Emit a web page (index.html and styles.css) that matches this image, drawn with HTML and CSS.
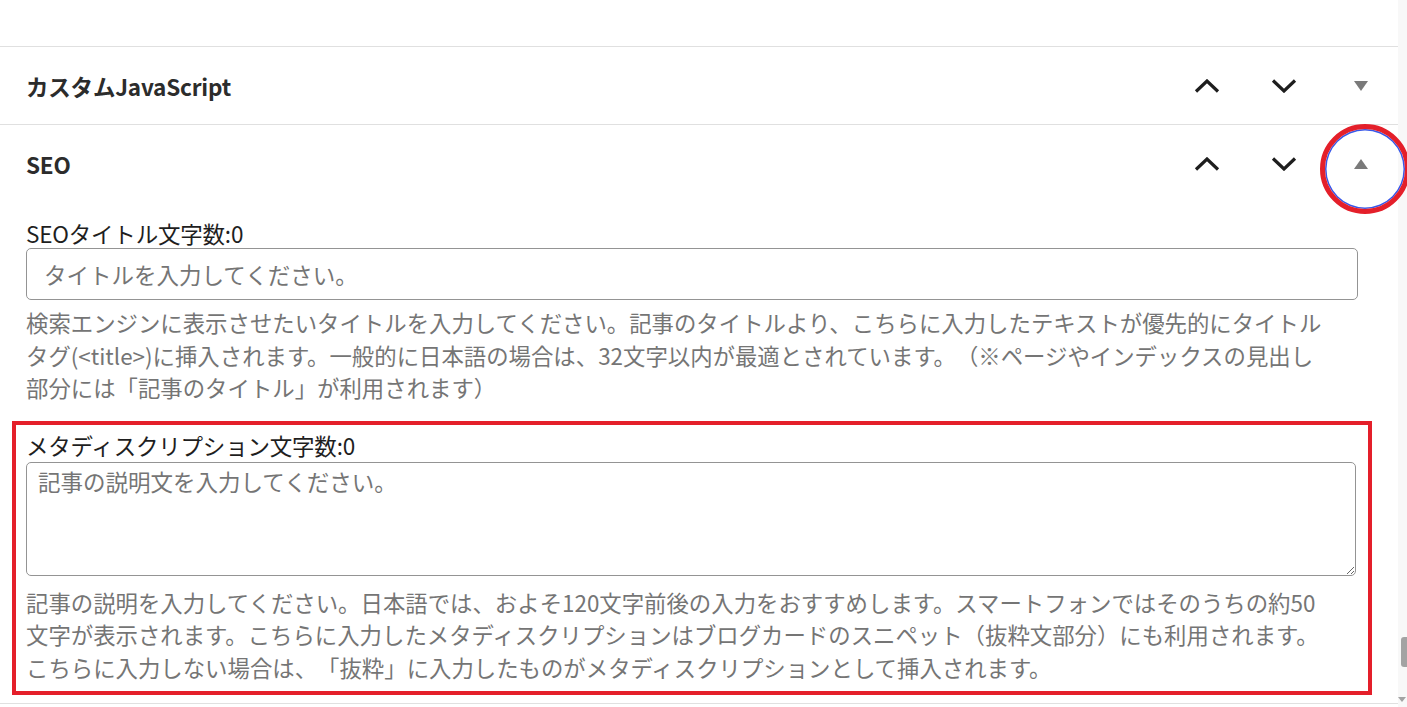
FILE: index.html
```html
<!DOCTYPE html>
<html lang="ja">

<head>
    <meta charset="UTF-8">
    <title>SEO設定</title>
    <meta name="viewport" content="width=device-width, initial-scale=1.0">
    <link rel="stylesheet" href="styles.css">
</head>

<body>
    <div class="page">
        <div class="top-space"></div>

        <div class="panel">
            <div class="panel-header">
                <h2 class="panel-title">カスタムJavaScript</h2>
                <div class="panel-controls">
                    <button class="ctrl-btn" type="button" aria-label="上へ移動">
                        <svg width="26" height="14" viewBox="0 0 26 14"><polyline points="2,12.5 13,2 24,12.5" /></svg>
                    </button>
                    <button class="ctrl-btn" type="button" aria-label="下へ移動">
                        <svg width="26" height="14" viewBox="0 0 26 14"><polyline points="2,1.5 13,12 24,1.5" /></svg>
                    </button>
                    <button class="ctrl-btn toggle" type="button" aria-label="開く">
                        <svg width="14" height="10" viewBox="0 0 14 10"><polygon points="0,0 14,0 7,10" /></svg>
                    </button>
                </div>
            </div>
        </div>

        <div class="panel open">
            <div class="panel-header">
                <h2 class="panel-title">SEO</h2>
                <div class="panel-controls">
                    <button class="ctrl-btn" type="button" aria-label="上へ移動">
                        <svg width="26" height="14" viewBox="0 0 26 14"><polyline points="2,12.5 13,2 24,12.5" /></svg>
                    </button>
                    <button class="ctrl-btn" type="button" aria-label="下へ移動">
                        <svg width="26" height="14" viewBox="0 0 26 14"><polyline points="2,1.5 13,12 24,1.5" /></svg>
                    </button>
                    <button class="ctrl-btn toggle marked" type="button" aria-label="閉じる">
                        <svg width="14" height="10" viewBox="0 0 14 10"><polygon points="7,0 14,10 0,10" /></svg>
                    </button>
                </div>
            </div>

            <div class="panel-body">
                <div class="field">
                    <label class="field-label" for="seo-title">SEOタイトル文字数:0</label>
                    <input class="text-input" id="seo-title" type="text" placeholder="タイトルを入力してください。">
                    <p class="help">検索エンジンに表示させたいタイトルを入力してください。記事のタイトルより、こちらに入力したテキストが優先的にタイトル<br>タグ(&lt;title&gt;)に挿入されます。一般的に日本語の場合は、32文字以内が最適とされています。（※ページやインデックスの見出し<br>部分には「記事のタイトル」が利用されます）</p>
                </div>

                <div class="field highlight">
                    <label class="field-label" for="seo-desc">メタディスクリプション文字数:0</label>
                    <textarea class="text-area" id="seo-desc" placeholder="記事の説明文を入力してください。"></textarea>
                    <p class="help">記事の説明を入力してください。日本語では、およそ120文字前後の入力をおすすめします。スマートフォンではそのうちの約50<br>文字が表示されます。こちらに入力したメタディスクリプションはブログカードのスニペット（抜粋文部分）にも利用されます。<br>こちらに入力しない場合は、「抜粋」に入力したものがメタディスクリプションとして挿入されます。</p>
                </div>
            </div>
        </div>
    </div>

    <div class="scrollbar">
        <div class="scroll-thumb"></div>
        <div class="scroll-arrow"></div>
    </div>
</body>

</html>
```

FILE: styles.css
```css
* {
    margin: 0;
    padding: 0;
    box-sizing: border-box;
}

body {
    display: flex;
    height: 100vh;
    overflow: hidden;
    background: #ffffff;
    font-family: "Noto Sans CJK JP", "Noto Sans", sans-serif;
    color: #1e1e1e;
    text-spacing-trim: space-all;
}

.page {
    width: 1398px;
    flex-shrink: 0;
}

.top-space {
    height: 46px;
}

.panel {
    border-top: 1px solid #e0e0e0;
}

.panel.open {
    border-bottom: 1px solid #e0e0e0;
}

.panel-header {
    height: 77px;
    display: flex;
    align-items: center;
    justify-content: space-between;
    padding-left: 26px;
}

.panel-title {
    font-size: 22.5px;
    font-weight: 700;
    line-height: 30px;
    color: #2c2c2c;
    letter-spacing: -0.2px;
}

.panel-controls {
    display: flex;
    gap: 3px;
    height: 100%;
}

.ctrl-btn {
    width: 74px;
    height: 100%;
    border: none;
    background: transparent;
    display: flex;
    align-items: center;
    justify-content: center;
    cursor: pointer;
    position: relative;
}

.ctrl-btn polyline {
    fill: none;
    stroke: #1e1e1e;
    stroke-width: 3.2;
}

.ctrl-btn.toggle polygon {
    fill: #7a7a7a;
}

/* red annotation ring round the toggle */
.ctrl-btn.marked::after {
    content: "";
    position: absolute;
    left: 50%;
    top: 50%;
    width: 80px;
    height: 80px;
    margin: -40px 0 0 -41px;
    border: 5px solid #e41f2a;
    border-radius: 50%;
    box-shadow: inset 0 0 0 1.5px #3858e9;
}

.panel-body {
    padding: 16px 40px 8px 26px;
}

.field-label {
    display: block;
    font-size: 22.5px;
    line-height: 30px;
    color: #1e1e1e;
    letter-spacing: -0.2px;
}

.text-input {
    display: block;
    width: 100%;
    height: 52px;
    border: 1px solid #949494;
    border-radius: 5px;
    padding: 0 17px;
    font-family: inherit;
    font-size: 22.5px;
    color: #1e1e1e;
}

.text-area {
    display: block;
    width: 100%;
    height: 114px;
    margin-top: 2px;
    border: 1px solid #949494;
    border-radius: 5px;
    padding: 2px 11px;
    font-family: inherit;
    font-size: 22.5px;
    line-height: 32px;
    color: #1e1e1e;
}

.text-input::placeholder,
.text-area::placeholder {
    color: #757575;
}

.help {
    margin-top: 6px;
    font-size: 22.4px;
    line-height: 32.5px;
    color: #757575;
    white-space: nowrap;
}

.highlight {
    margin: 17px -14px 0;
    padding: 5px 12px 8px 10px;
    border: 4px solid #e41f2a;
}

.highlight .help {
    margin-top: 10px;
}

.scrollbar {
    flex: 1;
    background: #f8f8f8;
    display: flex;
    flex-direction: column;
    align-items: flex-end;
    padding-top: 637px;
}

.scroll-thumb {
    width: 6px;
    height: 30px;
    background: #a3a3a3;
    border-radius: 3px 0 0 3px;
}

.scroll-arrow {
    margin-top: 30px;
    margin-right: 1px;
    width: 0;
    height: 0;
    border-left: 4px solid transparent;
    border-right: 4px solid transparent;
    border-top: 5px solid #a3a3a3;
}
```
